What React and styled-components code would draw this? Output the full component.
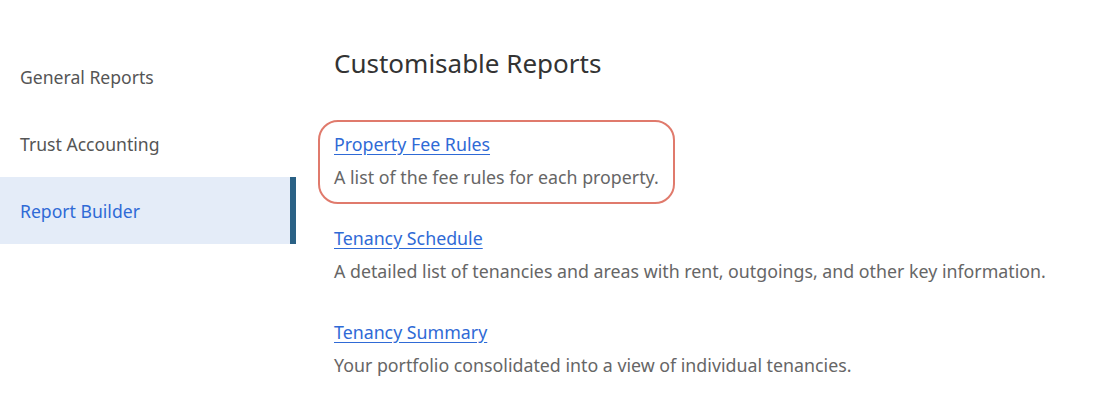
import React from "react";
import styled, { createGlobalStyle } from "styled-components";

const Global = createGlobalStyle`
  html, body { margin: 0; padding: 0; background: #fff; }
  body { font-family: "Noto Sans", "Open Sans", sans-serif; }
`;

const Page = styled.div`
  display: flex;
  width: 1118px;
  height: 416px;
  background: #fff;
`;

const Sidebar = styled.nav`
  width: 296px;
  padding-top: 43px;
  display: flex;
  flex-direction: column;
`;

const NavItem = styled.div`
  height: 67px;
  display: flex;
  align-items: center;
  padding-left: 20px;
  font-size: 17.6px;
  color: ${(p) => (p.$active ? "#2f6ad6" : "#555")};
  background: ${(p) => (p.$active ? "#e4ecf8" : "transparent")};
  border-right: 6px solid ${(p) => (p.$active ? "#2a6185" : "transparent")};
`;

const Main = styled.main`
  padding-left: 38px;
  padding-top: 44px;
  display: flex;
  flex-direction: column;
`;

const Title = styled.h1`
  margin: 0 0 38px;
  font-size: 26px;
  font-weight: 400;
  color: #333;
  line-height: 38px;
`;

const List = styled.div`
  display: flex;
  flex-direction: column;
  gap: 10px;
`;

const Item = styled.div`
  display: flex;
  flex-direction: column;
  gap: 9px;
  margin-left: -16px;
  padding: 10px 14px 13px 14px;
  border: 2px solid ${(p) => (p.$highlight ? "#e07a6c" : "transparent")};
  border-radius: 20px;
  align-self: flex-start;
`;

const Link = styled.a`
  color: #2f6ad6;
  font-size: 17.8px;
  line-height: 24px;
  text-decoration: underline;
  text-underline-offset: 3px;
  cursor: pointer;
`;

const Desc = styled.div`
  color: #666;
  font-size: 17.8px;
  line-height: 24px;
`;

const reports = [
  { name: "Property Fee Rules", desc: "A list of the fee rules for each property.", highlight: true },
  { name: "Tenancy Schedule", desc: "A detailed list of tenancies and areas with rent, outgoings, and other key information." },
  { name: "Tenancy Summary", desc: "Your portfolio consolidated into a view of individual tenancies." },
];

export default function App() {
  return (
    <Page>
      <Global />
      <Sidebar>
        <NavItem>General Reports</NavItem>
        <NavItem>Trust Accounting</NavItem>
        <NavItem $active>Report Builder</NavItem>
      </Sidebar>
      <Main>
        <Title>Customisable Reports</Title>
        <List>
          {reports.map((r) => (
            <Item key={r.name} $highlight={r.highlight}>
              <Link>{r.name}</Link>
              <Desc>{r.desc}</Desc>
            </Item>
          ))}
        </List>
      </Main>
    </Page>
  );
}
